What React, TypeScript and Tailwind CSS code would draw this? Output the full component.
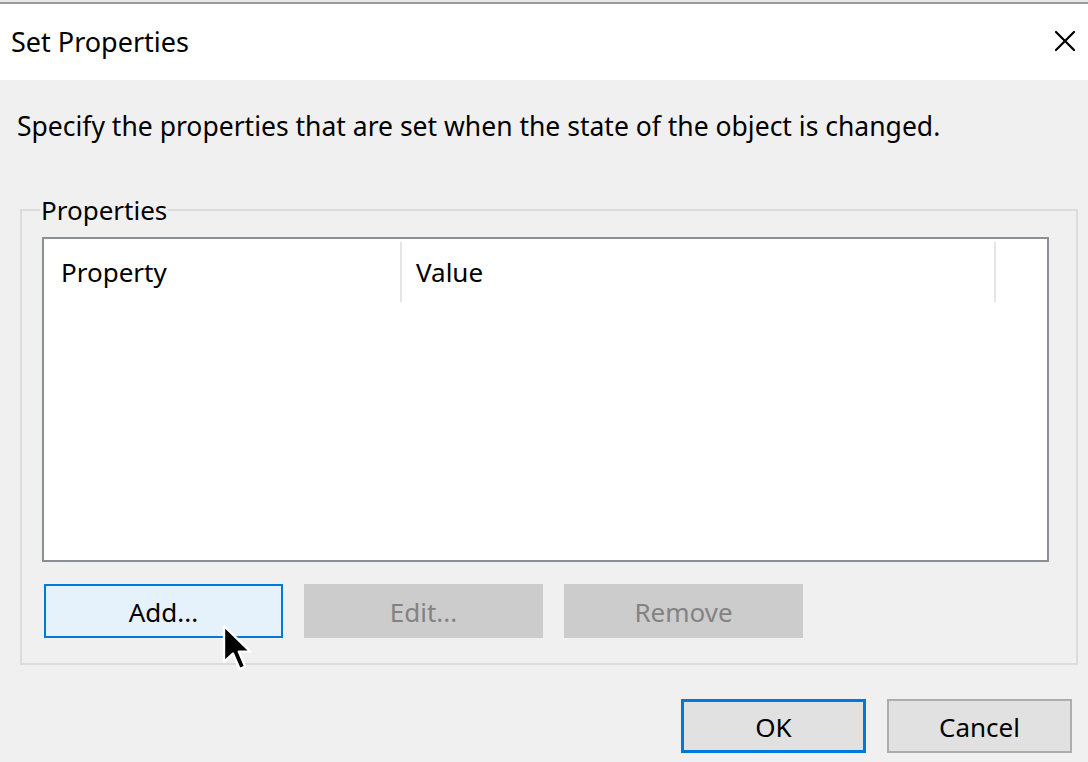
import { X } from 'lucide-react';

function DialogButton({
  label,
  variant = 'normal',
  className = '',
}: {
  label: string;
  variant?: 'normal' | 'hover' | 'default' | 'disabled';
  className?: string;
}) {
  const styles = {
    normal: 'bg-[#e1e1e1] border-2 border-[#adadad] text-black',
    hover: 'bg-[#e5f1fb] border-2 border-[#0078d7] text-black',
    default: 'bg-[#e1e1e1] border-[3px] border-[#0078d7] text-black',
    disabled: 'bg-[#cccccc] border-2 border-[#cccccc] text-[#838383]',
  }[variant];
  return (
    <button className={`flex items-center justify-center leading-none pt-[1px] ${styles} ${className}`}>
      {label}
    </button>
  );
}

function Cursor() {
  return (
    <svg
      className="absolute left-[222px] top-[624px]"
      width="32"
      height="52"
      viewBox="0 0 16 26"
    >
      <path
        d="M1 1 L1 19 L5.5 14.8 L8.8 22.5 L11.6 21.3 L8.4 13.8 L14.2 13.8 Z"
        fill="#000"
        stroke="#fff"
        strokeWidth="1.2"
        strokeLinejoin="round"
      />
    </svg>
  );
}

export default function App() {
  return (
    <div
      className="relative w-[1088px] h-[762px] bg-[#f0f0f0] overflow-hidden text-black"
      style={{ fontFamily: '"Noto Sans", "Open Sans", sans-serif' }}
    >
      {/* title bar */}
      <div className="h-[80px] bg-white flex flex-col">
        <div className="h-[4px] bg-[#e8e8e8] border-b-2 border-[#9a9a9a]" />
        <div className="flex-1 flex items-center justify-between pl-[11px] pr-[5px] pb-[2px]">
          <span className="text-[27px] leading-none">Set Properties</span>
          <X size={36} strokeWidth={1.5} className="text-black" />
        </div>
      </div>

      {/* body */}
      <div className="flex flex-col">
        <p className="pl-[17px] pt-[28px] text-[26.5px] leading-[36px]">
          Specify the properties that are set when the state of the object is changed.
        </p>

        <fieldset className="ml-[20px] mr-[10px] mt-[53px] border-2 border-[#dcdcdc] pl-[20px] pr-[27px] pb-[25px] pt-[14px]">
          <legend className="ml-[-2px] px-[1px] text-[26px] leading-[26px]">Properties</legend>

          <div className="h-[325px] bg-white border-2 border-[#8c9096] flex flex-col">
            <div className="flex h-[60px] mt-[3px] text-[26px] items-center">
              <div className="w-[358px] pl-[17px] h-full flex items-center border-r-2 border-[#e5e5e5]">
                Property
              </div>
              <div className="w-[594px] pl-[14px] h-full flex items-center border-r-2 border-[#e5e5e5]">
                Value
              </div>
            </div>
          </div>

          <div className="flex gap-[21px] mt-[22px] ml-[2px] text-[26px]">
            <DialogButton label="Add..." variant="hover" className="w-[239px] h-[54px]" />
            <DialogButton label="Edit..." variant="disabled" className="w-[239px] h-[54px]" />
            <DialogButton label="Remove" variant="disabled" className="w-[239px] h-[54px]" />
          </div>
        </fieldset>

        <div className="flex justify-end gap-[21px] pr-[16px] mt-[34px] text-[26px]">
          <DialogButton label="OK" variant="default" className="w-[185px] h-[54px]" />
          <DialogButton label="Cancel" className="w-[185px] h-[54px]" />
        </div>
      </div>

      <Cursor />
    </div>
  );
}
